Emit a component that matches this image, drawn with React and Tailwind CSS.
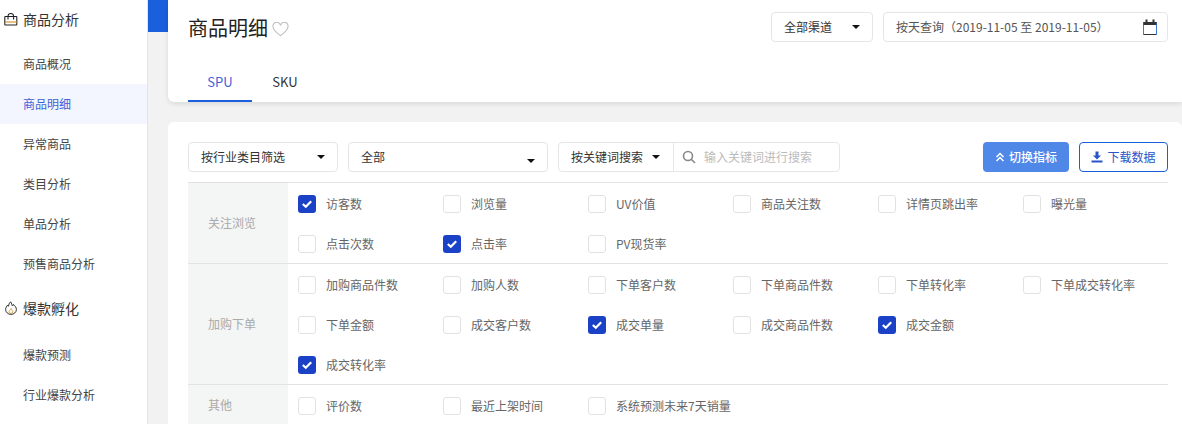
import { Fragment } from "react";

const font = { fontFamily: '"Noto Sans CJK SC", sans-serif' };

const groups = [
  {
    label: "关注浏览",
    items: [
      ["访客数", true],
      ["浏览量"],
      ["UV价值"],
      ["商品关注数"],
      ["详情页跳出率"],
      ["曝光量"],
      ["点击次数"],
      ["点击率", true],
      ["PV现货率"],
    ],
  },
  {
    label: "加购下单",
    items: [
      ["加购商品件数"],
      ["加购人数"],
      ["下单客户数"],
      ["下单商品件数"],
      ["下单转化率"],
      ["下单成交转化率"],
      ["下单金额"],
      ["成交客户数"],
      ["成交单量", true],
      ["成交商品件数"],
      ["成交金额", true],
      // this one starts its own row in the reference
      ["成交转化率", true, true],
    ],
  },
  {
    label: "其他",
    items: [["评价数"], ["最近上架时间"], ["系统预测未来7天销量"]],
  },
];

function Caret() {
  return (
    <span className="w-0 h-0 border-x-[4px] border-x-transparent border-t-[4px] border-t-[#111] shrink-0"></span>
  );
}

function Check({ label, checked }) {
  return (
    <div className="flex items-center h-10 pt-[2px] w-[145px]">
      {checked ? (
        <span className="w-[18px] h-[18px] rounded-[3px] bg-[#1a41c6] flex items-center justify-center shrink-0">
          <svg width="12" height="12" viewBox="0 0 12 12" fill="none">
            <path d="M1.8 6 L4.8 8.8 L10.2 3.2" stroke="#fff" strokeWidth="2.2" />
          </svg>
        </span>
      ) : (
        <span className="w-[18px] h-[18px] rounded-[3px] bg-white border border-[#e2e2e2] shrink-0"></span>
      )}
      <span className="ml-[10px] text-xs text-[#666] whitespace-nowrap">{label}</span>
    </div>
  );
}

function NavItem({ children, active }) {
  return (
    <div
      className={`h-10 pl-[23px] flex items-center text-xs ${
        active ? "bg-[#f3f6fe] text-[#3f62d8]" : "text-[#444]"
      }`}
    >
      {children}
    </div>
  );
}

export default function App() {
  return (
    <div style={font} className="flex h-[424px] w-[1182px] overflow-hidden bg-[#f2f2f2]">
      <aside className="w-[148px] shrink-0 bg-white border-r border-[#e4e4e4]">
        <div className="h-11 pb-[6px] flex items-center pl-1 text-sm text-[#333]">
          <svg width="14" height="13" viewBox="0 0 14 13" fill="none" stroke="#222" strokeWidth="1.1">
            <rect x="0.8" y="3.5" width="12" height="8.5" rx="0.5" />
            <path d="M4 6.5 V3 A2.8 2.5 0 0 1 9.6 3 V6.5" />
            <path d="M0.8 9 H12.8" stroke="#d08a1e" />
          </svg>
          <span className="ml-[5px]">商品分析</span>
        </div>
        <NavItem>商品概况</NavItem>
        <NavItem active>商品明细</NavItem>
        <NavItem>异常商品</NavItem>
        <NavItem>类目分析</NavItem>
        <NavItem>单品分析</NavItem>
        <NavItem>预售商品分析</NavItem>
        <div className="h-[51px] pb-[3px] flex items-center pl-[5px] text-sm text-[#333]">
          <svg width="12" height="14" viewBox="0 0 12 14" fill="none" stroke="#333" strokeWidth="1">
            <path d="M5.5 0.8 C7 2.5 6.8 4 7.4 5 C8 4.7 8.3 4 8.4 3.4 C10 4.8 11.4 6.6 11.4 8.4 A5.4 5 0 0 1 0.6 8.4 C0.6 6.4 2 5.4 2.6 4 C3 4.6 3.2 5 3.6 5.2 C3.6 3.6 4.4 2 5.5 0.8 Z" />
            <path d="M6 7.5 C6.5 9 8 9.5 7.8 11 A2 2 0 0 1 4 11 C4 9.8 5.6 9 6 7.5 Z" stroke="#d08a1e" strokeWidth="0.8" />
          </svg>
          <span className="ml-[6px]">爆款孵化</span>
        </div>
        <NavItem>爆款预测</NavItem>
        <NavItem>行业爆款分析</NavItem>
      </aside>

      <main className="relative flex-1 min-w-0">
        <div className="absolute left-0 top-0 w-full h-8 bg-[#1a5fdc]"></div>
        <div className="relative ml-5">
          <section className="h-[102px] bg-white rounded-bl-[6px] shadow-[0_2px_5px_rgba(0,0,0,0.1)] pl-5 pr-[14px] pt-3 flex flex-col justify-between">
            <div className="flex items-center h-[30px]">
              <h1 className="text-xl text-[#222] font-normal mt-[2px]">商品明细</h1>
              <svg className="ml-1 mt-[4px]" width="17" height="15" viewBox="0 0 18 16" fill="none" stroke="#bbb" strokeWidth="1.1">
                <path d="M9 14.5 C5 11.5 1 8.5 1 5 A3.8 3.8 0 0 1 9 3.5 A3.8 3.8 0 0 1 17 5 C17 8.5 13 11.5 9 14.5 Z" />
              </svg>
              <div className="ml-auto flex gap-[10px]">
                <div className="w-[102px] h-[30px] border border-[#e6e6e6] rounded bg-white flex items-center justify-between pl-3 pr-3 text-xs text-[#333]">
                  全部渠道
                  <Caret />
                </div>
                <div className="w-[285px] h-[30px] border border-[#e6e6e6] rounded bg-white flex items-center justify-between pl-3 pr-[10px] text-xs text-[#555]">
                  按天查询（2019-11-05 至 2019-11-05）
                  <svg width="14" height="16" viewBox="0 0 14 16" fill="none">
                    <rect x="0.5" y="3.5" width="13" height="12" stroke="#3a7bd5" strokeWidth="1" />
                    <rect x="0.5" y="3" width="13" height="3" fill="#333" />
                    <rect x="2.5" y="0.5" width="2" height="4" fill="#333" />
                    <rect x="9.5" y="0.5" width="2" height="4" fill="#333" />
                    <path d="M1 15.5 H13" stroke="#333" />
                  </svg>
                </div>
              </div>
            </div>
            <div className="flex text-[13px]">
              <div className="w-16 h-10 pt-[2px] flex items-center justify-center text-[#3f62d8] border-b-2 border-[#1a5fdc]">
                SPU
              </div>
              <div className="w-[66px] h-10 flex items-center justify-center text-[#333]">SKU</div>
            </div>
          </section>

          <section className="mt-5 bg-white rounded-t-[6px] pl-5 pr-[14px] pt-5 pb-5">
            <div className="flex items-center h-[30px] text-xs">
              <div className="w-[150px] h-full border border-[#e6e6e6] rounded flex items-center justify-between pl-3 pr-3 text-[#333]">
                按行业类目筛选
                <Caret />
              </div>
              <div className="ml-[10px] w-[200px] h-full border border-[#e6e6e6] rounded flex justify-between pl-3 pr-3 pt-[6px] text-[#333]">
                全部
                <span className="flex mt-[10px]">
                  <Caret />
                </span>
              </div>
              <div className="ml-[10px] w-[282px] h-full border border-[#e6e6e6] rounded flex">
                <div className="w-[115px] border-r border-[#e6e6e6] flex items-center justify-between pl-3 pr-[13px] text-[#333]">
                  按关键词搜索
                  <Caret />
                </div>
                <div className="flex items-center pl-2 text-[#bbb]">
                  <svg width="14" height="14" viewBox="0 0 14 14" fill="none" stroke="#888" strokeWidth="1.6">
                    <circle cx="6" cy="6" r="4.5" />
                    <path d="M9.5 9.5 L13 13" />
                  </svg>
                  <span className="ml-2">输入关键词进行搜索</span>
                </div>
              </div>
              <div className="ml-auto flex gap-[10px]">
                <button className="w-[86px] h-[30px] rounded bg-[#5088e8] text-white font-medium flex items-center justify-center gap-1">
                  <svg width="10" height="10" viewBox="0 0 10 10" fill="none" stroke="#fff" strokeWidth="1.5">
                    <path d="M1.5 5 L5 1.5 L8.5 5" />
                    <path d="M1.5 9 L5 5.5 L8.5 9" />
                  </svg>
                  切换指标
                </button>
                <button className="w-[89px] h-[30px] rounded bg-white border border-[#1a5fdc] text-[#2a55c8] flex items-center justify-center gap-1">
                  <svg width="12" height="12" viewBox="0 0 12 12" fill="#2a55c8">
                    <path d="M4.5 0.5 H7.5 V4.5 H10 L6 8.5 L2 4.5 H4.5 Z" />
                    <rect x="0.5" y="9.5" width="11" height="2" />
                  </svg>
                  下载数据
                </button>
              </div>
            </div>

            <div className="mt-[10px] border-t border-[#e2e2e2]">
              {groups.map((group) => (
                <div key={group.label} className="flex border-b border-[#e2e2e2] last:border-b-0">
                  <div className="w-[100px] shrink-0 bg-[#f4f5f5] flex items-center pl-5 text-xs text-[#aaa]">
                    {group.label}
                  </div>
                  <div className="pl-[10px] flex flex-wrap flex-1">
                    {group.items.map(([label, checked, newRow]) => (
                      <Fragment key={label}>
                        {newRow && <div className="basis-full h-0"></div>}
                        <Check label={label} checked={checked} />
                      </Fragment>
                    ))}
                  </div>
                </div>
              ))}
            </div>
          </section>
        </div>
      </main>
    </div>
  );
}
